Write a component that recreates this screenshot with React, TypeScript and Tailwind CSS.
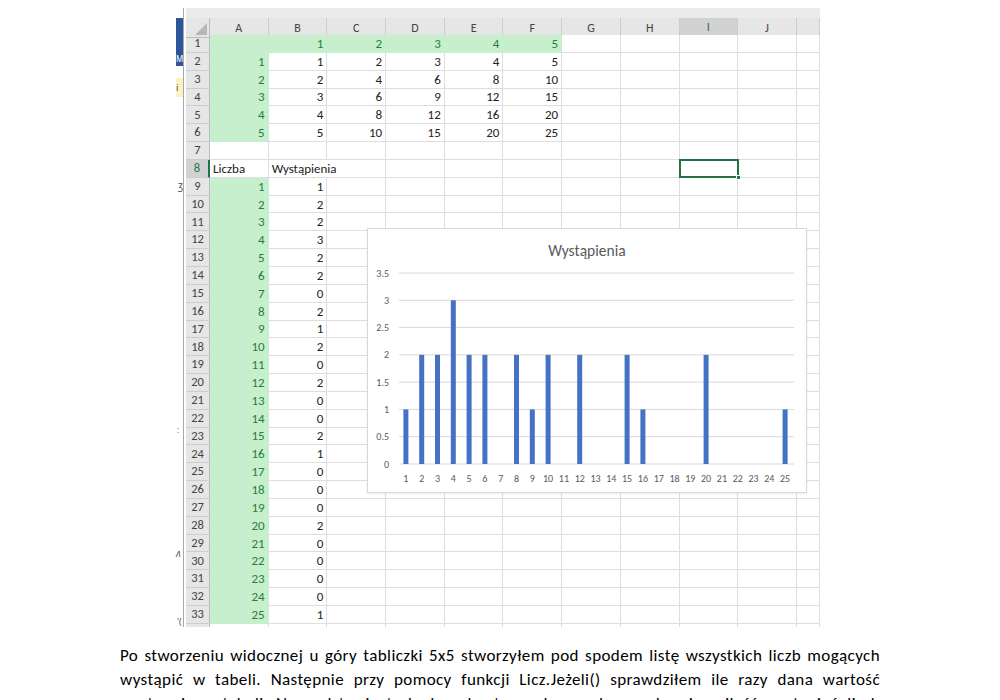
import React from "react";

const COLS = ["A", "B", "C", "D", "E", "F", "G", "H", "I", "J", ""];
const COUNTS = [1, 2, 2, 3, 2, 2, 0, 2, 1, 2, 0, 2, 0, 0, 2, 1, 0, 0, 0, 2, 0, 0, 0, 0, 1];
const ROWS = 34;
const SEL_ROW = 8;
const SEL_COL = 8;

type Cell = { v?: string | number; green?: boolean; left?: boolean; noRight?: boolean };

function getCell(r: number, c: number): Cell {
  if (r === 1 && c <= 5) return { v: c === 0 ? undefined : c, green: true };
  if (r >= 2 && r <= 6) {
    if (c === 0) return { v: r - 1, green: true };
    if (c <= 5) return { v: (r - 1) * c };
  }
  if (r === 8) {
    if (c === 0) return { v: "Liczba", left: true };
    if (c === 1) return { v: "Wystąpienia", left: true, noRight: true };
  }
  if (r >= 9 && r <= 33) {
    if (c === 0) return { v: r - 8, green: true };
    if (c === 1) return { v: COUNTS[r - 9] };
  }
  return {};
}

const font = "font-['Carlito','Calibri','Lato',sans-serif]";

function Chart() {
  // plot geometry, chart-box coordinates
  const x0 = 31;
  const x1 = 426;
  const yZero = 236;
  const unit = 54.57;
  const step = (x1 - x0) / 25;
  const ticks = [0, 0.5, 1, 1.5, 2, 2.5, 3, 3.5];

  return (
    <div className="absolute left-[192px] top-[220px] w-[440px] h-[265px] bg-white border border-[#d9d9d9] shadow-[0_1px_2px_rgba(0,0,0,0.08)]">
      <svg width="438" height="263" className={font}>
        <text x="219" y="27" textAnchor="middle" fontSize="15.5" fill="#595959">
          Wystąpienia
        </text>
        {ticks.map((t) => {
          const y = yZero - t * unit - 1;
          return (
            <g key={t}>
              <line x1={x0} x2={x1} y1={y} y2={y} stroke="#d9d9d9" strokeWidth="1" />
              <text x="21" y={y + 3.5} textAnchor="end" fontSize="10" fill="#595959">
                {t}
              </text>
            </g>
          );
        })}
        {COUNTS.map((n, i) => {
          const cx = x0 + step * (i + 0.5) - 1;
          return (
            <g key={i}>
              {n > 0 && (
                <rect x={cx - 2.5} y={yZero - 1 - n * unit} width="5" height={n * unit} fill="#4472c4" />
              )}
              <text x={cx} y={yZero + 17} textAnchor="middle" fontSize="10" fill="#595959">
                {i + 1}
              </text>
            </g>
          );
        })}
      </svg>
    </div>
  );
}

function Sheet() {
  return (
    <div className={`w-[634px] shrink-0 flex flex-col ${font}`}>
      <div className="h-[10px] shrink-0 bg-[#ebebeb]" />
      {/* column headers */}
      <div className="grid shrink-0 grid-cols-[24px_repeat(10,58.7px)_23px] h-[17px] bg-[#e6e6e6] text-[12px] text-[#444]">
        <div className="relative border-r border-b border-[#bdbdbd]">
          <svg width="12" height="12" className="absolute right-[2px] bottom-[2px]">
            <polygon points="12,0 12,12 0,12" fill="#b7b7b7" />
          </svg>
        </div>
        {COLS.map((c, i) => (
          <div
            key={i}
            className={`flex items-center justify-center border-r border-r-[#cdcdcd] ${
              i === SEL_COL
                ? "bg-[#d2d2d2] border-b-2 border-b-[#217346] text-[#217346]"
                : "border-b border-b-[#bdbdbd]"
            }`}
          >
            {c}
          </div>
        ))}
      </div>
      {/* body */}
      <div className="grid shrink-0 grid-cols-[24px_repeat(10,58.7px)_23px] auto-rows-[17.85px] text-[13px] leading-none">
        {Array.from({ length: ROWS }, (_, ri) => {
          const r = ri + 1;
          return (
            <React.Fragment key={r}>
              <div
                className={`flex items-center justify-center border-b border-b-[#cdcdcd] text-[12.5px] ${
                  r === SEL_ROW
                    ? "bg-[#d2d2d2] text-[#217346] border-r-2 border-r-[#217346]"
                    : "bg-[#e6e6e6] text-[#444] border-r border-r-[#bdbdbd]"
                }`}
              >
                {r}
              </div>
              {COLS.map((_, c) => {
                const cell = getCell(r, c);
                return (
                  <div
                    key={c}
                    className={`relative flex items-center px-[3px] whitespace-nowrap border-b ${
                      cell.noRight ? "" : "border-r"
                    } ${
                      cell.green
                        ? "bg-[#c6efce] border-[#c6efce] text-[#2a7d36]"
                        : "bg-white border-[#dedede] text-[#222]"
                    } ${cell.left ? "justify-start" : "justify-end"}`}
                  >
                    {cell.v !== undefined && <span className="relative z-10">{cell.v}</span>}
                    {r === SEL_ROW && c === SEL_COL && (
                      <div className="absolute z-10 -left-px -top-px w-[60px] h-[19px] border-2 border-[#217346]">
                        <div className="absolute -right-[4px] -bottom-[4px] w-[5px] h-[5px] bg-[#217346] border border-white" />
                      </div>
                    )}
                  </div>
                );
              })}
            </React.Fragment>
          );
        })}
      </div>
    </div>
  );
}

export default function App() {
  return (
    <div className="w-[1000px] h-[700px] bg-white overflow-hidden">
      <div className="relative ml-[175px] mt-[8px] w-[645px] h-[619px] overflow-hidden flex items-start">
        {/* sliver of the window behind */}
        <div className="relative w-[8px] h-full shrink-0 flex flex-col">
          <div className="h-[10px] shrink-0" />
          <div className="h-[48px] shrink-0 bg-[#2b579a] ml-[1px] flex items-end text-[8px] text-white leading-none pb-[3px]">M</div>
          <div className="h-[12px] shrink-0" />
          <div className="h-[19px] shrink-0 bg-[#fdf1c4] ml-[1px] text-[9px] text-[#444] leading-[19px]">i</div>
          <div className="absolute left-[3px] top-[170px] text-[10px] text-[#555]">ʒ</div>
          <div className="absolute left-[2px] top-[415px] text-[9px] text-[#777]">:</div>
          <div className="absolute left-[1px] top-[538px] text-[10px] italic text-[#555]">ʌ</div>
          <div className="absolute left-[2px] top-[607px] text-[9px] text-[#555]">'(</div>
        </div>
        <div className="w-px h-full shrink-0 bg-[#a8a8a8]" />
        <div className="w-[2px] shrink-0" />
        <Sheet />
        <Chart />
      </div>
      <div className={`ml-[120px] w-[760px] mt-[17px] text-[17px] tracking-[0.4px] leading-[24px] text-black ${font}`}>
        <p className="text-justify [text-align-last:justify]">
          Po stworzeniu widocznej u góry tabliczki 5x5 stworzyłem pod spodem listę wszystkich liczb mogących
        </p>
        <p className="text-justify [text-align-last:justify]">
          wystąpić w tabeli. Następnie przy pomocy funkcji Licz.Jeżeli() sprawdziłem ile razy dana wartość
        </p>
        <p className="text-justify [text-align-last:justify]">
          występuje w tabeli. Na podstawie tych danych utworzyłem wykres pokazujący ilość wystąpień liczb
        </p>
      </div>
    </div>
  );
}
